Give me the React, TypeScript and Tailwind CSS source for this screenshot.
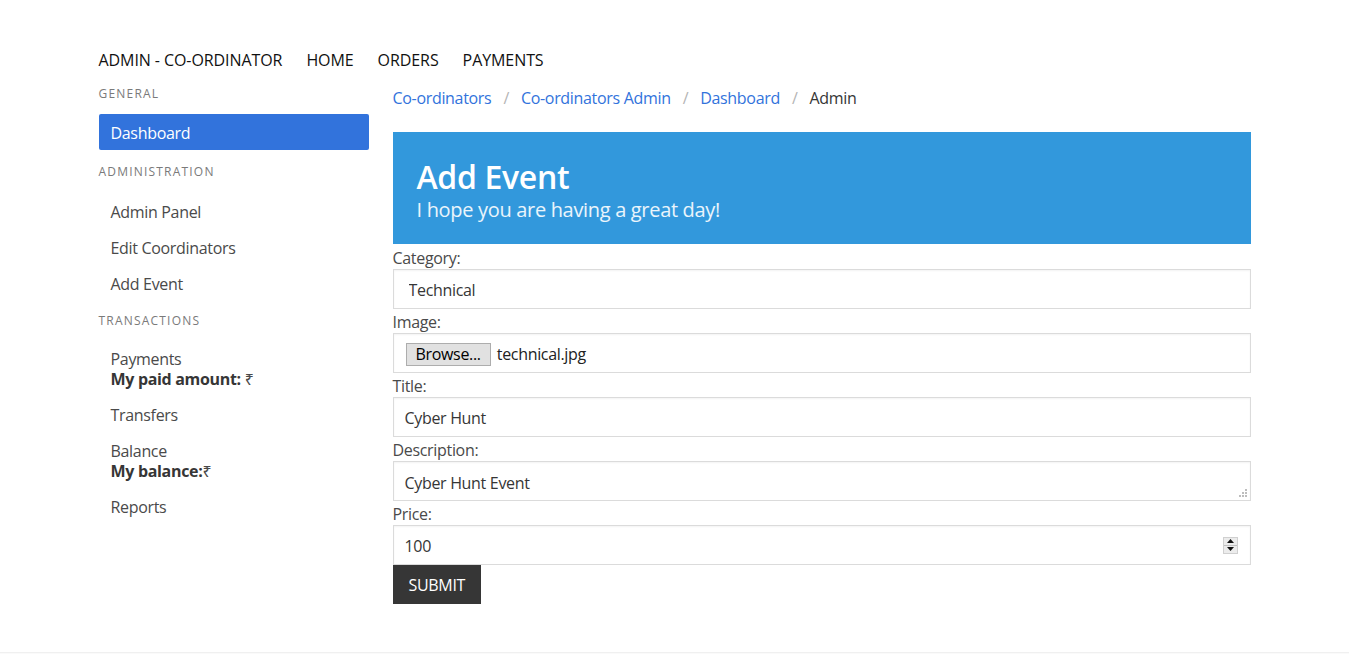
import { type ReactNode } from 'react';

const font = { fontFamily: '"Open Sans", "Noto Sans", sans-serif' };

function MenuLabel({ children, className = '' }: { children: ReactNode; className?: string }) {
  return (
    <p className={`text-[12px] leading-[18px] tracking-[0.1em] uppercase text-[#7a7a7a] ${className}`}>{children}</p>
  );
}

function MenuItem({ children, active = false }: { children: ReactNode; active?: boolean }) {
  return (
    <a
      href="#"
      className={`block px-3 pt-[9px] pb-[7px] text-[16px] leading-5 rounded-[2px] ${
        active ? 'bg-[#3273dc] text-white' : 'text-[#4a4a4a] hover:bg-[#f5f5f5]'
      }`}
    >
      {children}
    </a>
  );
}

function Field({ label, children }: { label: string; children: ReactNode }) {
  return (
    <div>
      <label className="block pt-[2px] text-[16px] leading-[22px] text-[#4a4a4a]">{label}</label>
      {children}
    </div>
  );
}

const boxCls = 'h-10 w-full border border-[#dbdbdb] bg-white text-[16px] text-[#363636] shadow-[inset_0_1px_2px_rgba(10,10,10,0.05)] outline-none';

export default function App() {
  const crumbs = ['Co-ordinators', 'Co-ordinators Admin', 'Dashboard'];

  return (
    <div style={font} className="min-h-[654px] bg-white tracking-[-0.02em] text-[#4a4a4a]">
      <div className="mx-auto w-[1152px]">
        <nav className="flex pt-[48px] text-[16px] leading-6 tracking-[-0.005em] text-[#111]">
          <a href="#" className="pr-3">ADMIN - CO-ORDINATOR</a>
          <a href="#" className="px-3">HOME</a>
          <a href="#" className="px-3">ORDERS</a>
          <a href="#" className="px-3">PAYMENTS</a>
        </nav>

        <div className="mt-[12px] flex gap-6">
          <aside className="w-[270px] shrink-0">
            <MenuLabel className="pt-px">General</MenuLabel>
            <ul className="mt-[11px]">
              <li><MenuItem active>Dashboard</MenuItem></li>
            </ul>
            <MenuLabel className="mt-3 pt-px">Administration</MenuLabel>
            <ul className="mt-[12px]">
              <li><MenuItem>Admin Panel</MenuItem></li>
              <li><MenuItem>Edit Coordinators</MenuItem></li>
              <li><MenuItem>Add Event</MenuItem></li>
            </ul>
            <MenuLabel className="mt-[10px] pt-px">Transactions</MenuLabel>
            <ul className="mt-[10px]">
              <li>
                <MenuItem>
                  Payments
                  <br />
                  <b className="text-[#363636]">My paid amount:</b> ₹
                </MenuItem>
              </li>
              <li><MenuItem>Transfers</MenuItem></li>
              <li>
                <MenuItem>
                  Balance
                  <br />
                  <b className="text-[#363636]">My balance:</b>₹
                </MenuItem>
              </li>
              <li><MenuItem>Reports</MenuItem></li>
            </ul>
          </aside>

          <main className="flex-1">
            <ul className="mt-[2px] flex items-center text-[16px] leading-6">
              {crumbs.map((c, i) => (
                <li key={c} className="flex items-center">
                  {i > 0 && <span className="text-[#b5b5b5]">/</span>}
                  <a href="#" className={`text-[#3273dc] ${i === 0 ? 'pr-3' : 'px-3'}`}>{c}</a>
                </li>
              ))}
              <li className="flex items-center">
                <span className="text-[#b5b5b5]">/</span>
                <span className="px-3 text-[#363636]">Admin</span>
              </li>
            </ul>

            <section className="mt-[22px] bg-[#3298dc] px-6 pt-[27px] pb-[22px] text-white">
              <h1 className="text-[32px] leading-9 font-semibold">Add Event</h1>
              <h2 className="mt-[2px] text-[20px] leading-[25px] text-white/90">I hope you are having a great day!</h2>
            </section>

            <form className="mt-px" onSubmit={(e) => e.preventDefault()}>
              <Field label="Category:">
                <select defaultValue="Technical" className={`${boxCls} appearance-none pt-px pl-[15px]`}>
                  <option>Technical</option>
                  <option>Non-Technical</option>
                </select>
              </Field>
              <Field label="Image:">
                <div className={`${boxCls} flex items-center pl-3`}>
                  <span className="mt-[2px] flex h-[23px] items-center border border-[#adadad] bg-[#e1e1e1] px-[9px] text-[16px] text-black">
                    Browse...
                  </span>
                  <span className="mt-[2px] ml-[6px] text-[16px] text-[#222]">technical.jpg</span>
                </div>
              </Field>
              <Field label="Title:">
                <input defaultValue="Cyber Hunt" className={`${boxCls} px-[11px] pt-px`} />
              </Field>
              <Field label="Description:">
                <div className="relative">
                  <textarea
                    defaultValue="Cyber Hunt Event"
                    rows={1}
                    className={`${boxCls} block resize-none px-[11px] pt-[9px] leading-6`}
                  />
                  <svg className="pointer-events-none absolute right-[3px] bottom-[3px]" width="9" height="9" viewBox="0 0 9 9">
                    <g fill="#bdbdbd">
                      <rect x="6" y="0" width="2" height="2" />
                      <rect x="3" y="3" width="2" height="2" />
                      <rect x="6" y="3" width="2" height="2" />
                      <rect x="0" y="6" width="2" height="2" />
                      <rect x="3" y="6" width="2" height="2" />
                      <rect x="6" y="6" width="2" height="2" />
                    </g>
                  </svg>
                </div>
              </Field>
              <Field label="Price:">
                <div className={`${boxCls} flex items-center pr-3`}>
                  <input defaultValue="100" className="h-full flex-1 bg-transparent px-[11px] pt-px outline-none" />
                  <span className="flex h-[17px] w-[15px] flex-col border border-[#d0d0d0] bg-[#ececec]">
                    <span className="flex flex-1 items-center justify-center border-b border-[#c0c0c0]">
                      <svg width="7" height="4" viewBox="0 0 7 4"><path d="M3.5 0 7 4H0z" fill="#111" /></svg>
                    </span>
                    <span className="flex flex-1 items-center justify-center">
                      <svg width="7" height="4" viewBox="0 0 7 4"><path d="M0 0h7L3.5 4z" fill="#111" /></svg>
                    </span>
                  </span>
                </div>
              </Field>
              <button type="submit" className="h-[39px] bg-[#363636] px-4 pt-px text-[16px] text-white">SUBMIT</button>
            </form>
          </main>
        </div>
      </div>
      <footer className="mt-12 h-10 border-t border-[#f0f0f0] bg-[#fafafa]" />
    </div>
  );
}
